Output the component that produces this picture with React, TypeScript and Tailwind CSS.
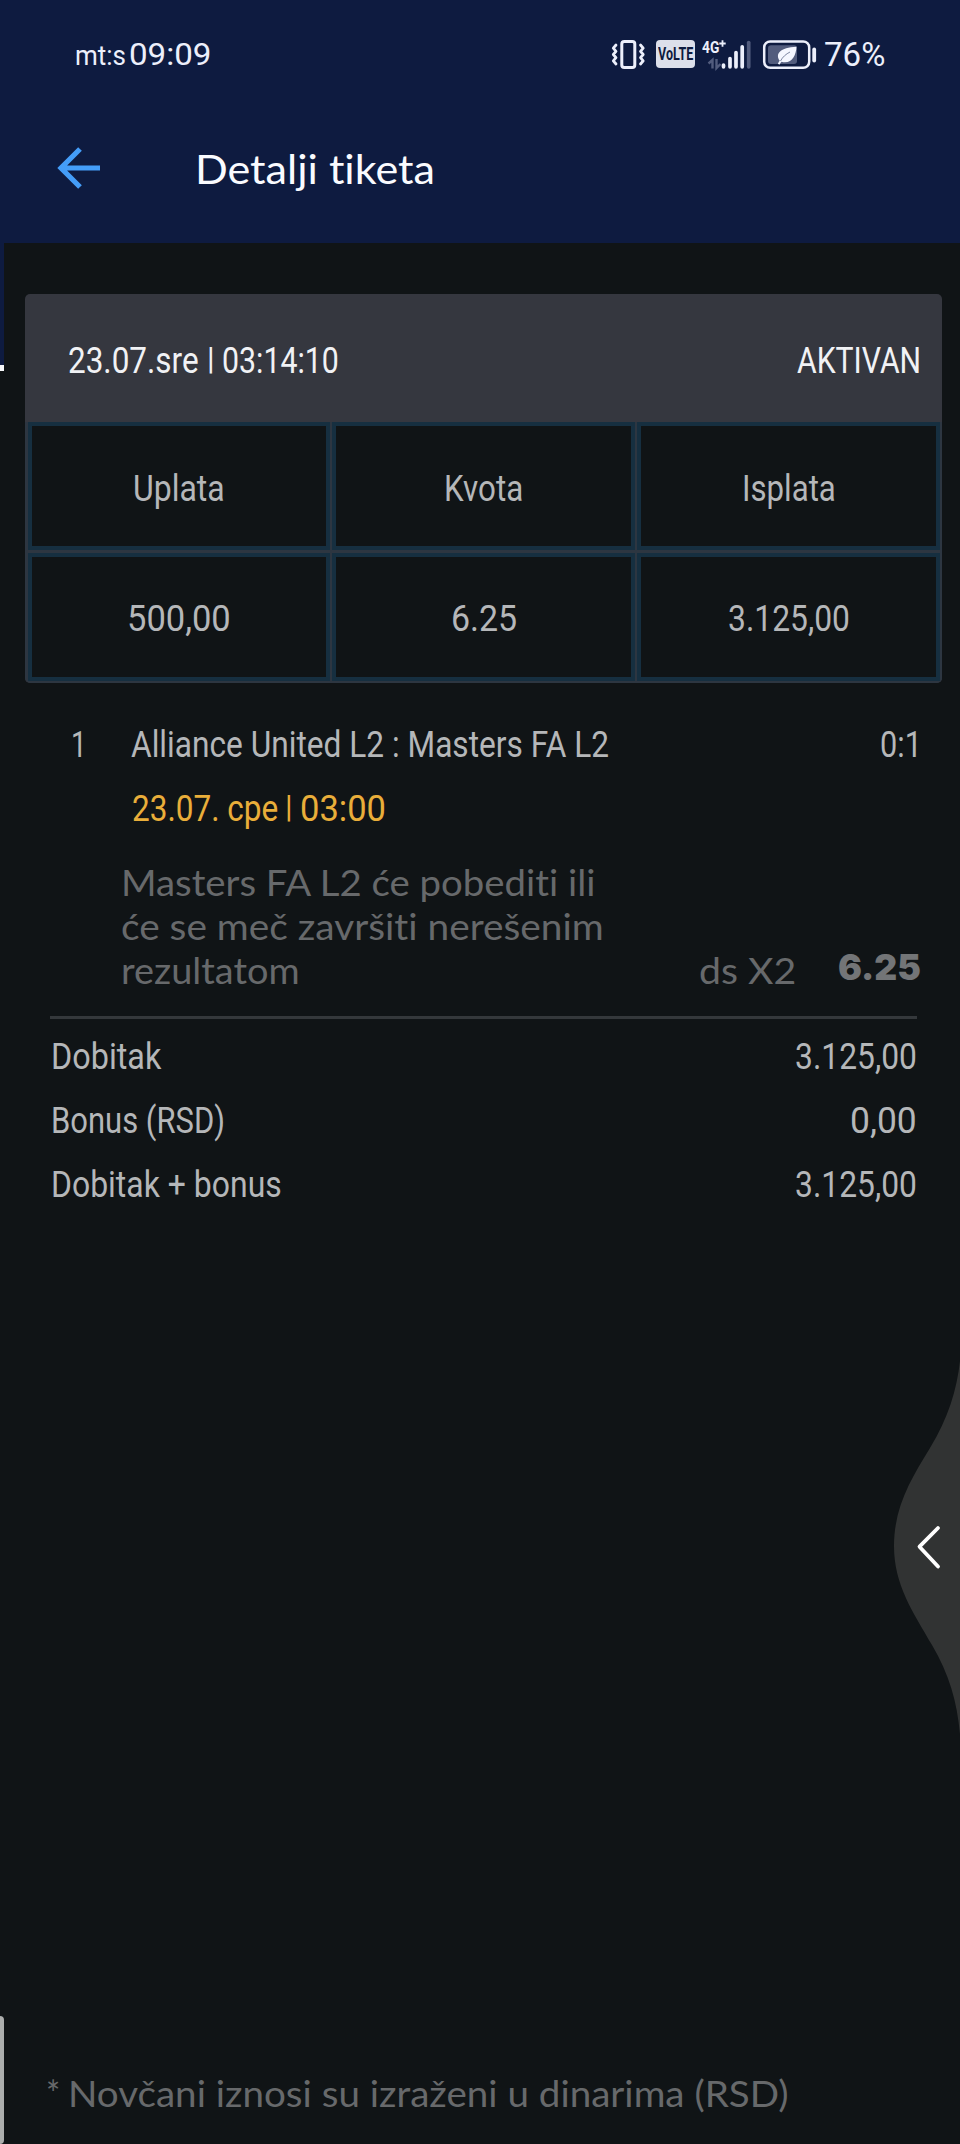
import { useLayoutEffect, useRef, useState } from "react";

type FitProps = { text: string; className: string };

/** One line of text, stretched or condensed to the width of its box. */
function Fit({ text, className }: FitProps) {
  const box = useRef<HTMLDivElement>(null);
  const line = useRef<HTMLSpanElement>(null);
  const [ratio, setRatio] = useState(1);
  useLayoutEffect(() => {
    if (box.current && line.current) {
      setRatio(box.current.clientWidth / line.current.offsetWidth);
    }
  }, [text]);
  return (
    <div ref={box} className={`shrink-0 whitespace-nowrap ${className}`}>
      <span ref={line} className="inline-block origin-left" style={{ transform: `scaleX(${ratio})` }}>
        {text}
      </span>
    </div>
  );
}

const condensed = "font-['Roboto',sans-serif] text-[36.5px] leading-[48px]";
const regular = "font-['Lato',sans-serif] text-[36px] leading-[44px] [font-variant-ligatures:none]";

function StatusBar() {
  return (
    <div className="flex h-[110px] items-start pl-[75px] pt-[35px] text-[#eceffb]">
      <Fit text="mt:s" className="mt-[3px] w-[51px] font-['Roboto',sans-serif] text-[28px] leading-[36px]" />
      <Fit text="09:09" className="ml-[3px] w-[82px] font-['Roboto',sans-serif] text-[31.5px] leading-[40px]" />
      <svg className="ml-[400px] mt-[4px] h-[32px] w-[35px]" viewBox="0 0 35 32" fill="none" stroke="currentColor">
        <rect x="10.8" y="2.4" width="13" height="26" rx="2.5" strokeWidth="3" />
        <path d="M5 6l-2.7 3.2L5 12.3 2.3 15.5 5 18.7 2.3 21.8 5 25M29.5 6l2.7 3.2-2.7 3.1 2.7 3.2-2.7 3.2 2.7 3.1-2.7 3.2" strokeWidth="2.8" strokeLinejoin="round" strokeLinecap="round" />
      </svg>
      <div className="ml-[10px] mt-[5px] flex h-[28px] w-[39px] items-center justify-center rounded-[4px] bg-[#dcdfea] text-[#0e1b40]">
        <Fit text="VoLTE" className="w-[35px] font-['Roboto',sans-serif] text-[19px] font-bold leading-[28px]" />
      </div>
      <div className="relative ml-[7px] mt-[4px] h-[32px] w-[52px]">
        <svg className="h-[32px] w-[52px]" viewBox="0 0 52 32" fill="none">
          <path d="M21.5 26v1.8M28 19.5v8.3M34 13.5v14.3M40.2 7.8v20" stroke="#eceffb" strokeWidth="3.7" strokeLinecap="round" />
          <path d="M46.7 3.5v24.3" stroke="#525c7d" strokeWidth="3.7" strokeLinecap="round" />
          <path d="M6.5 24.5l4-3.5v8.5M14.5 20v9l4-4" stroke="#525c7d" strokeWidth="2.4" />
          <path d="M17.3 4.5h6.4M20.5 1.3v6.4" stroke="#eceffb" strokeWidth="1.8" />
        </svg>
        <div className="absolute left-0 top-[-3px]">
          <Fit text="4G" className="w-[17px] font-['Roboto',sans-serif] text-[17px] font-bold leading-[22px]" />
        </div>
      </div>
      <svg className="ml-[8px] mt-[4px] h-[32px] w-[56px]" viewBox="0 0 56 32" fill="none">
        <rect x="2.2" y="2.4" width="45" height="26.4" rx="6" stroke="#eceffb" strokeWidth="2.5" />
        <rect x="6" y="6.3" width="29" height="18.6" rx="3" fill="#525c7d" />
        <path d="M16 25c0-1 .8-2.2 1.7-3.3C13 15 18 8.5 34.5 7.8 34 17 29.5 25.5 19.5 22.8c-.8.8-1.3 1.5-1.7 2.6z" fill="#f4f6ff" />
        <path d="M18.5 22c2-4 5.5-7 9.5-9" stroke="#7d86a2" strokeWidth="1" />
        <path d="M52.2 10.5v11" stroke="#eceffb" strokeWidth="3.8" strokeLinecap="round" />
      </svg>
      <Fit text="76%" className="ml-[6px] w-[61px] font-['Roboto',sans-serif] text-[32.5px] leading-[40px]" />
    </div>
  );
}

function Header() {
  return (
    <header className="h-[243px] bg-[#0e1b40]">
      <StatusBar />
      <div className="flex items-start pl-[56px] pt-[29px]">
        <svg className="mt-[7px] h-[44px] w-[45px]" viewBox="0 0 45 44" fill="none" stroke="#449df8" strokeWidth="5.2">
          <path d="M44 22H5M24 3L5 22l19 19" />
        </svg>
        <Fit text="Detalji tiketa" className="ml-[94px] w-[240px] font-['Lato',sans-serif] text-[41.5px] leading-[58px] text-[#fafbff] [font-variant-ligatures:none]" />
      </div>
    </header>
  );
}

const cells = [
  { text: "Uplata", width: "w-[92px]" },
  { text: "Kvota", width: "w-[79px]" },
  { text: "Isplata", width: "w-[94px]" },
  { text: "500,00", width: "w-[104px]" },
  { text: "6.25", width: "w-[66px]" },
  { text: "3.125,00", width: "w-[122px]" },
];

/** Thin divider that is as tall as a capital letter. */
function Bar({ className }: { className: string }) {
  return (
    <Fit text="|" className={`w-[8px] font-['Roboto',sans-serif] text-[31px] leading-[48px] ${className}`} />
  );
}

function Summary() {
  return (
    <section className="ml-[25px] mt-[51px] w-[917px] overflow-hidden rounded-[5px] bg-[#35373f]">
      <div className="flex h-[128px] items-center justify-between pl-[43px] pr-[21px] pt-[5px] text-[#f1f2f5]">
        <div className="flex items-start">
          <Fit text="23.07.sre" className={`w-[131px] ${condensed}`} />
          <Bar className="-mt-[2px] ml-[8px]" />
          <Fit text="03:14:10" className={`ml-[7px] w-[117px] ${condensed}`} />
        </div>
        <Fit text="AKTIVAN" className={`w-[124px] ${condensed}`} />
      </div>
      <div className="grid grid-cols-3 grid-rows-[128px_128px] gap-[2.5px] bg-[#2d3641] px-[2.5px] pb-[2.5px] text-[#b5b7b9]">
        {cells.map((cell) => (
          <div key={cell.text} className="flex items-center justify-center border-[4px] border-[#162f40] bg-[#101416] pl-px pt-[5px]">
            <Fit text={cell.text} className={`${cell.width} ${condensed}`} />
          </div>
        ))}
      </div>
    </section>
  );
}

function Match() {
  return (
    <section className="pl-[71px] pr-[38px] pt-[38px] text-[#b5b7b9]">
      <div className="flex h-[64px]">
        <Fit text="1" className={`w-[16px] ${condensed}`} />
        <Fit text="Alliance United L2 : Masters FA L2" className={`ml-[44px] w-[478px] ${condensed}`} />
        <Fit text="0:1" className={`ml-auto w-[42px] ${condensed}`} />
      </div>
      <div className="flex h-[64px] pl-[61px] text-[#e9ae3a]">
        <Fit text="23.07. cpe" className={`w-[146px] ${condensed}`} />
        <Bar className="-mt-[2px] ml-[7px]" />
        <Fit text="03:00" className={`ml-[7px] w-[86px] ${condensed}`} />
      </div>
      <div className="mt-[11px] flex items-end pl-[50px] text-[#67696b]">
        <div>
          <Fit text="Masters FA L2 će pobediti ili" className={`w-[474px] ${regular}`} />
          <Fit text="će se meč završiti nerešenim" className={`w-[483px] ${regular}`} />
          <Fit text="rezultatom" className={`w-[179px] ${regular}`} />
        </div>
        <Fit text="ds X2" className={`ml-auto w-[97px] ${regular}`} />
        <Fit text="6.25" className="mb-[2px] ml-[42px] mr-px w-[83px] font-['Inter',sans-serif] text-[35.5px] font-black leading-[44px] text-[#737577]" />
      </div>
    </section>
  );
}

const totals = [
  { label: "Dobitak", labelWidth: "w-[110px]", value: "3.125,00", valueWidth: "w-[122px]" },
  { label: "Bonus (RSD)", labelWidth: "w-[174px]", value: "0,00", valueWidth: "w-[67px]" },
  { label: "Dobitak + bonus", labelWidth: "w-[231px]", value: "3.125,00", valueWidth: "w-[122px]" },
];

function Totals() {
  return (
    <section className="ml-[50px] mt-[24px] w-[867px] border-t-[3px] border-[#34383b] pl-px pt-[14px] text-[#b5b7b9]">
      {totals.map((row) => (
        <div key={row.label} className="flex h-[64px] justify-between">
          <Fit text={row.label} className={`${row.labelWidth} ${condensed}`} />
          <Fit text={row.value} className={`${row.valueWidth} ${condensed}`} />
        </div>
      ))}
    </section>
  );
}

export default function App() {
  return (
    <main className="relative flex h-[2144px] w-[960px] flex-col overflow-hidden bg-[#101416]">
      <Header />
      <Summary />
      <Match />
      <Totals />
      <footer className="mt-auto flex pb-[29px] pl-[46px] text-[#67696b]">
        <Fit text="*" className={`w-[14px] ${regular}`} />
        <Fit text="Novčani iznosi su izraženi u dinarima (RSD)" className={`ml-[8px] w-[721px] ${regular}`} />
      </footer>
      <div className="absolute left-0 top-[243px] h-[122px] w-[4px] bg-[#0e1b40]" />
      <div className="absolute left-0 top-[365px] h-[6px] w-[4px] bg-[#f7f8fa]" />
      <div className="absolute left-0 top-[2016px] h-[128px] w-[4px] rounded-r-[4px] bg-[#acaead]" />
      <svg className="absolute right-0 top-[1355px] h-[385px] w-[67px]" viewBox="0 0 67 385" fill="none">
        <path d="M67 6C64 34 55 64 37 93 18 124 1 152 1 191s19 66 38 99c17 29 25 56 28 89z" fill="#313333" />
        <path d="M45 173L26.5 191.7 45 211.5" stroke="#fff" strokeWidth="3.8" strokeLinecap="round" strokeLinejoin="round" />
      </svg>
    </main>
  );
}
